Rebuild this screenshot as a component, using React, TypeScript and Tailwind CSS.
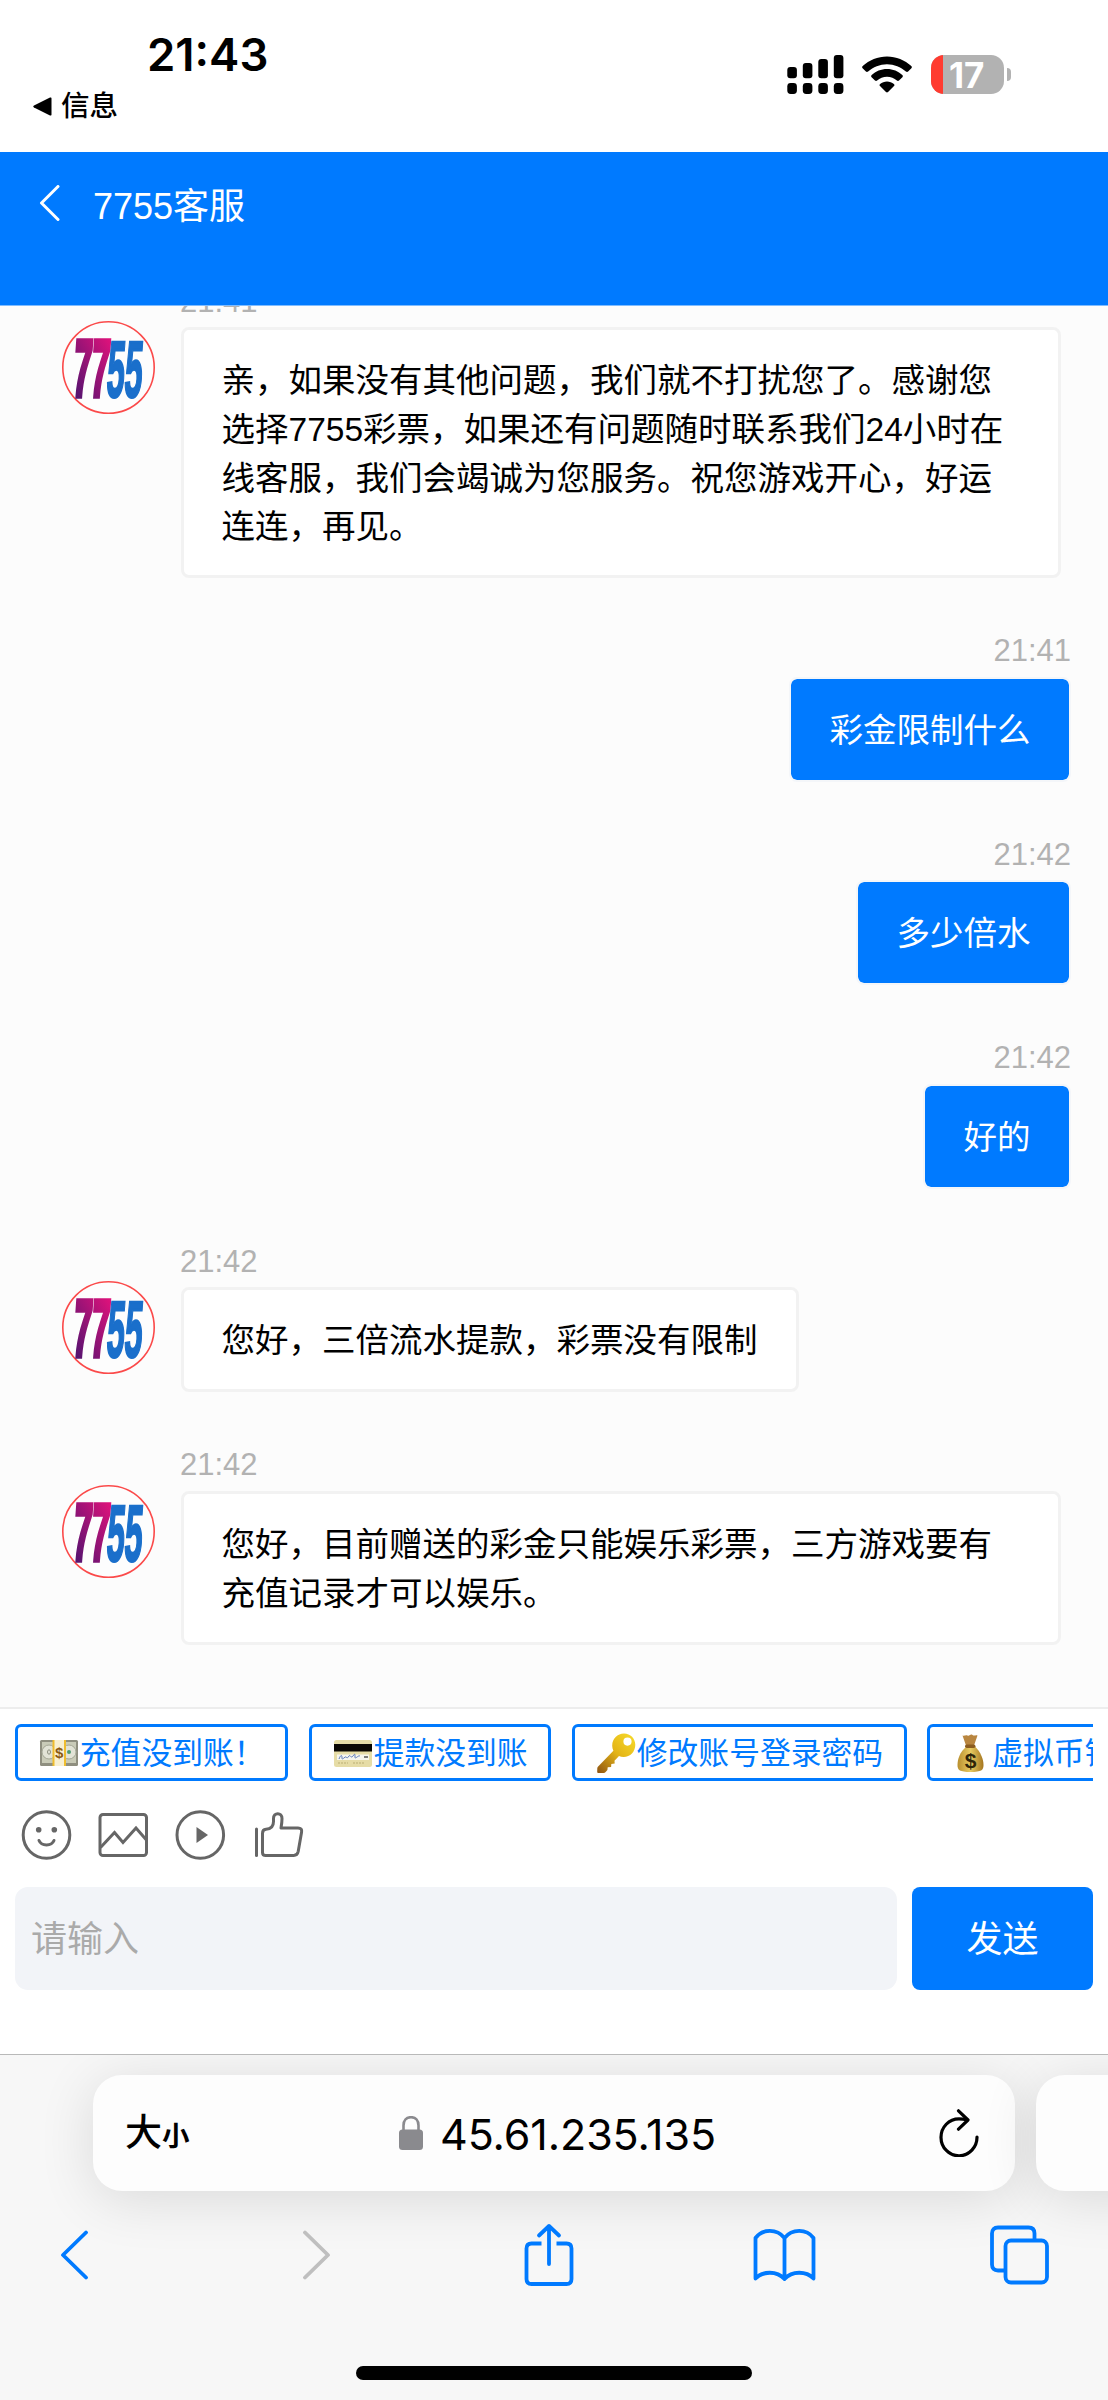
import React from "react";

const CJK = "font-['Liberation_Sans','Noto_Sans_CJK_SC',sans-serif]";
const UI = "font-['Inter','Noto_Sans_CJK_SC',sans-serif]";

type Message = { from: "agent" | "me"; time: string; lines: string[]; wide?: boolean };

const messages: Message[] = [
  {
    from: "agent",
    time: "21:41",
    wide: true,
    lines: [
      "亲，如果没有其他问题，我们就不打扰您了。感谢您",
      "选择7755彩票，如果还有问题随时联系我们24小时在",
      "线客服，我们会竭诚为您服务。祝您游戏开心，好运",
      "连连，再见。",
    ],
  },
  { from: "me", time: "21:41", lines: ["彩金限制什么"] },
  { from: "me", time: "21:42", lines: ["多少倍水"] },
  { from: "me", time: "21:42", lines: ["好的"] },
  { from: "agent", time: "21:42", lines: ["您好，三倍流水提款，彩票没有限制"] },
  {
    from: "agent",
    time: "21:42",
    wide: true,
    lines: ["您好，目前赠送的彩金只能娱乐彩票，三方游戏要有", "充值记录才可以娱乐。"],
  },
];

function SignalIcon() {
  const tops = [67, 63, 59, 55];
  return (
    <svg className="h-[39px] w-[57px]" viewBox="0 55 57 39">
      {tops.map((t, i) => (
        <g key={t}>
          <rect x={i * 15.5 + 0.3} y={t} width="9.6" height={78.2 - t} rx="3" />
          <rect x={i * 15.5 + 0.3} y="83" width="9.6" height="11" rx="3.4" />
        </g>
      ))}
    </svg>
  );
}

function WifiIcon() {
  return (
    <svg className="h-[37px] w-[50px]" viewBox="0 0 50 37">
      <path d="M25 .5c9.200 0 17.800 3.600 24.300 9.600.7.7.7 1.600.1 2.200l-3.300 3.300c-.6.6-1.500.6-2.200 0C38.800 11 32.200 8.200 25 8.200S11.200 11 6.100 15.600c-.7.6-1.600.6-2.200 0L.6 12.300c-.6-.6-.6-1.500.1-2.200C7.200 4.100 15.800.5 25 .5z" />
      <path d="M25 13c5.900 0 11.300 2.300 15.300 6 .7.600.7 1.500.1 2.200l-3.400 3.400c-.6.6-1.500.6-2.100 0-2.700-2.400-6.100-3.800-9.900-3.800s-7.200 1.400-9.900 3.800c-.6.6-1.500.6-2.100 0l-3.400-3.400c-.6-.7-.6-1.600.1-2.200 4-3.700 9.400-6 15.300-6z" />
      <path d="M25 25.500c2.600 0 5 .9 6.900 2.400.7.6.7 1.500.1 2.200l-6 6c-.6.6-1.400.6-2 0l-6-6c-.6-.7-.6-1.600.1-2.200 1.900-1.500 4.300-2.400 6.900-2.400z" />
    </svg>
  );
}

function StatusBar() {
  return (
    <div className={`flex h-[152px] shrink-0 justify-between bg-white text-black ${UI}`}>
      <div className="pt-[27px]">
        <div className="ml-[147px] h-[56px] text-[45.500px] leading-[56px] font-semibold">21:43</div>
        <div className="mt-[3px] ml-[33px] flex h-[40px] items-center">
          <svg className="h-[19px] w-[19px]" viewBox="0 0 19 19">
            <path d="M17 .6c1-.4 1.500.2 1.500 1v15.800c0 .8-.5 1.400-1.500 1L1 10.500c-1-.5-1-1.500 0-2z" />
          </svg>
          <span className="ml-[9px] text-[28.500px] leading-[40px] font-medium">信息</span>
        </div>
      </div>
      <div className="mt-[55px] mr-[97px] flex h-[39px]">
        <SignalIcon />
        <div className="ml-[18.500px] pt-[1px]">
          <WifiIcon />
        </div>
        <div className="ml-[19px] flex h-[39px] w-[73px] overflow-hidden rounded-[13px] bg-[#b2b2b2]">
          <div className="h-full w-[12px] bg-[#ff3b30]" />
          <div className="ml-[6px] text-[35px] leading-[40px] font-bold text-white">17</div>
        </div>
        <div className="mt-[13px] ml-[2.500px] h-[13px] w-[4.500px] rounded-r-full bg-[#b2b2b2]" />
      </div>
    </div>
  );
}

function Header() {
  return (
    <header className={`flex h-[154px] shrink-0 items-start border-b border-[#7fbcff] bg-[#007aff] pl-[39px] text-white ${CJK}`}>
      <svg className="mt-[33px] h-[36px] w-[21px]" viewBox="0 0 21 36">
        <path d="M19 1.500 2.500 18 19 34.500" fill="none" stroke="currentColor" strokeWidth="3" strokeLinecap="round" strokeLinejoin="round" />
      </svg>
      <h1 className="mt-[30px] ml-[33px] text-[36px] leading-[50px]">7755客服</h1>
    </header>
  );
}

function Avatar() {
  return (
    <svg className="-mt-[6px] h-[93px] w-[93px] shrink-0" viewBox="0 0 93 93">
      <defs>
        <linearGradient id="logo77" x1="0.8" y1="0" x2="0.2" y2="1">
          <stop offset="0" stopColor="#e8127c" />
          <stop offset="1" stopColor="#45146f" />
        </linearGradient>
      </defs>
      <circle cx="46.500" cy="46.500" r="45.700" fill="#fdfdfd" stroke="#fb4a4a" strokeWidth="1.600" />
      <g fontFamily="Liberation Sans" fontWeight="bold" fontSize="80">
        <text transform="translate(10 75) skewX(-4) scale(.4 1)" fill="url(#logo77)" stroke="url(#logo77)" strokeWidth="5.500">
          77
        </text>
        <text transform="translate(43.500 75.500) skewX(-4) scale(.4 1)" fill="#1a6fcb" stroke="#1a6fcb" strokeWidth="2.500">
          55
        </text>
      </g>
    </svg>
  );
}

function Bubble({ message }: { message: Message }) {
  const mine = message.from === "me";
  return (
    <div
      className={`rounded-[8px] text-[33.500px] leading-[48.800px] whitespace-nowrap ${
        mine
          ? "border-2 border-[#f4f6f9] bg-[#007aff] bg-clip-padding px-[38.500px] pt-[28px] pb-[24px] text-white"
          : "border-3 border-[#f2f2f2] bg-white px-[38px] pt-[27px] pb-[23px] text-black"
      } ${message.wide ? "w-[880px]" : ""}`}
    >
      {message.lines.map((line) => (
        <div key={line}>{line}</div>
      ))}
    </div>
  );
}

function MessageRow({ message }: { message: Message }) {
  const mine = message.from === "me";
  return (
    <div className={`mt-[53.200px] flex shrink-0 flex-col ${mine ? "items-end pr-[37px]" : "items-start pl-[61.500px]"}`}>
      <div className={`mb-[5.500px] h-[40px] text-[31px] leading-[40px] text-[#b2b2b2] ${mine ? "" : "ml-[118.500px]"}`}>
        {message.time}
      </div>
      <div className="flex items-start gap-[26px]">
        {!mine && <Avatar />}
        <Bubble message={message} />
      </div>
    </div>
  );
}

function CashIcon() {
  return (
    <svg className="h-[40px] w-[40px]" viewBox="0 0 40 40">
      <rect x="1" y="7" width="38" height="26" rx="1.500" fill="#8f8f80" />
      <rect x="3" y="9" width="34" height="21" fill="#c9cbb8" />
      <circle cx="10" cy="19" r="7" fill="#e2e3d6" stroke="#a4a795" />
      <circle cx="30" cy="19" r="7" fill="#e2e3d6" stroke="#a4a795" />
      <circle cx="30" cy="19" r="2" fill="#4d9a72" />
      <ellipse cx="10" cy="19" rx="1.500" ry="2.200" fill="none" stroke="#8d9080" />
      <rect x="14" y="7" width="12.500" height="26" fill="#f8f0d2" />
      <path d="M14.500 7v26M26 7v26" stroke="#efbd2e" strokeWidth="2" />
      <text x="20.200" y="25" textAnchor="middle" fontFamily="Liberation Sans" fontWeight="bold" fontSize="15" fill="#8b5a12">
        $
      </text>
    </svg>
  );
}

function CardIcon() {
  return (
    <svg className="h-[40px] w-[40px]" viewBox="0 0 40 40">
      <rect x="1" y="7" width="38" height="27" rx="2.500" fill="#e6dca6" />
      <rect x="1" y="11" width="38" height="7.500" fill="#0b0803" />
      <rect x="4" y="21.500" width="32" height="5.500" fill="#f6f6ee" />
      <path d="M6 26c2-5 3-4 3-1s3-2 4-1 2 1 3-1 2 3 4 0 2-2 2 1 3-2 5-1" fill="none" stroke="#5b78b8" strokeWidth="1" />
      <path d="M31 24h4" stroke="#555" strokeWidth="1.500" />
      <path d="M5 30h10M20 30h11" stroke="#c9bd85" strokeWidth="1.500" strokeDasharray="2 1" />
    </svg>
  );
}

function KeyIcon() {
  return (
    <svg className="h-[42px] w-[40px]" viewBox="0 0 40 42">
      <defs>
        <linearGradient id="keyGold" x1="1" y1="0" x2="0" y2="1">
          <stop offset="0" stopColor="#f8dc2c" />
          <stop offset=".5" stopColor="#e3b416" />
          <stop offset="1" stopColor="#8e5312" />
        </linearGradient>
      </defs>
      <path
        fill="url(#keyGold)"
        fillRule="evenodd"
        d="M28 1.500c6.500 0 11.300 5 11.300 11.300 0 7-5 12.200-11.700 12.200-1.700 0-3.300-.3-4.600-1l-4.500 4.700.2 2.800-3.400.4-.2 3-3.400.3-.3 2.700-2 2.300c-.4.500-1 .8-1.600.8L2.500 41c-.8 0-1.300-.5-1.300-1.300l.1-3.500c0-.6.200-1 .6-1.500l15.500-16c-.8-1.600-1.200-3.300-1.200-5C16.200 6.500 21.500 1.500 28 1.500zM31.500 5.500a4 4 0 1 0 0 8.200 4 4 0 0 0 0-8.200z"
      />
    </svg>
  );
}

function MoneyBagIcon() {
  return (
    <svg className="h-[40px] w-[40px]" viewBox="0 0 40 40">
      <defs>
        <linearGradient id="bagGold" x1="0" y1="0" x2="1" y2="0">
          <stop offset="0" stopColor="#b98f2f" />
          <stop offset=".5" stopColor="#e8cb62" />
          <stop offset="1" stopColor="#a5761f" />
        </linearGradient>
      </defs>
      <path d="M11.500 2.500c2 1 3-1 5 0s3-2 5-.5 3-.5 5 .5l-3.500 10h-8z" fill="#b98640" />
      <path d="M15 14c-6 5-8.500 12-8.500 18 0 5 2 7 13 7s13-2 13-7c0-6-3-13-8-18z" fill="url(#bagGold)" />
      <rect x="14" y="11.500" width="10.500" height="3.600" rx="1.800" fill="#8b5c20" />
      <text x="19.500" y="34.500" textAnchor="middle" fontFamily="Liberation Sans" fontWeight="bold" fontSize="21" fill="#2e2408">
        $
      </text>
    </svg>
  );
}

const chips: { label: string; icon: React.ReactNode }[] = [
  { label: "充值没到账！", icon: <CashIcon /> },
  { label: "提款没到账", icon: <CardIcon /> },
  { label: "修改账号登录密码", icon: <KeyIcon /> },
  { label: "虚拟币钱包", icon: <MoneyBagIcon /> },
];

function QuickReplies() {
  return (
    <div className="mx-[15px] mt-[15px] flex h-[57px] gap-[20.500px] overflow-hidden">
      {chips.map((chip) => (
        <div
          key={chip.label}
          className="flex h-[57px] shrink-0 items-center rounded-[6px] border-3 border-[#007aff] px-[20.800px] text-[30.800px] whitespace-nowrap text-[#007aff]"
        >
          {chip.icon}
          <span className="mt-[2px] ml-[1px] leading-[44px]">{chip.label}</span>
        </div>
      ))}
    </div>
  );
}

function ToolIcons() {
  const common = "h-[52px] w-[52px]";
  return (
    <div className="mt-[28px] ml-[20px] flex h-[52px] gap-[25.200px] text-[#666]">
      <svg className={common} viewBox="0 0 52 52" fill="none" stroke="currentColor" strokeWidth="3">
        <circle cx="26.500" cy="26" r="23.300" />
        <path d="M19 31.500c2.500 6 12.500 6 15 0" strokeLinecap="round" />
        <circle cx="18.700" cy="20.800" r="2.800" fill="currentColor" stroke="none" />
        <circle cx="34.300" cy="20.800" r="2.800" fill="currentColor" stroke="none" />
      </svg>
      <svg className={common} viewBox="0 0 52 52" fill="none" stroke="currentColor" strokeWidth="3">
        <rect x="3" y="5.500" width="46.500" height="41" rx="3" />
        <path d="m3.500 38.500 14-15 8.500 10 13-14.500 10 11.500" />
      </svg>
      <svg className={common} viewBox="0 0 52 52" fill="none" stroke="currentColor" strokeWidth="3">
        <circle cx="26.300" cy="26" r="23.300" />
        <path d="M22.500 18v16l11.500-8z" fill="currentColor" stroke="none" />
      </svg>
      <svg className={common} viewBox="0 0 52 52" fill="none" stroke="currentColor" strokeWidth="3" strokeLinejoin="round">
        <path d="M4.500 20v26.500" strokeLinecap="round" />
        <path d="M10.500 24.500c0-3 1-4 3.500-4.200 5.500-.3 7.500-2.800 7.500-7.800V9.500c0-6.500 8.500-6.500 8.500 0 0 4-.5 6.500-1 9.500H46c3 0 4 1.500 3.600 4l-3.400 19.500c-.6 2.800-1.700 4-4.500 4h-28c-2.200 0-3.200-1-3.200-3z" />
      </svg>
    </div>
  );
}

function Composer() {
  return (
    <div className={`flex h-[347px] shrink-0 flex-col border-t-2 border-[#ededed] bg-white ${CJK}`}>
      <QuickReplies />
      <ToolIcons />
      <div className="mx-[15px] mt-[26px] flex h-[103px] gap-[15px] text-[36px] leading-[105px]">
        <div className="flex-1 rounded-[13px] bg-[#f2f4f8] pl-[16px] text-[#aaaaaa]">请输入</div>
        <button className="w-[181px] rounded-[8px] bg-[#007aff] text-center text-white">发送</button>
      </div>
    </div>
  );
}

function AddressBar() {
  const shadow = "shadow-[0_8px_56px_rgba(0,0,0,0.12)]";
  return (
    <div className="mt-[20px] ml-[93px] flex h-[116px] gap-[21px]">
      <div className={`flex w-[922px] shrink-0 items-center rounded-[29px] bg-[#fdfdfd] text-black ${shadow}`}>
        <div className="mt-[3px] ml-[32px] flex w-[274px] items-baseline font-medium">
          <span className="text-[37px] leading-[60px]">大</span>
          <span className="text-[27.500px] leading-[60px] font-bold">小</span>
        </div>
        <svg className="h-[34px] w-[24px]" viewBox="0 0 24 34" fill="#8a8a8e">
          <rect x="0" y="13.500" width="24" height="20.500" rx="3.500" />
          <path d="M4.500 15V9.500C4.500 4.500 7.500 1.200 12 1.200s7.500 3.300 7.500 8.300V15" fill="none" stroke="#8a8a8e" strokeWidth="2.600" />
        </svg>
        <div className="mt-[2px] ml-[17px] flex-1 text-[43px] leading-[60px] tracking-[-0.1px]">45.61.235.135</div>
        <svg className="mr-[36.500px] h-[48px] w-[40px]" viewBox="0 0 40 48" fill="none" stroke="currentColor" strokeWidth="3.200" strokeLinecap="round" strokeLinejoin="round">
          <path d="M38 28A18 18.500 0 1 1 20 9.800c3 0 5 .3 8 1" />
          <path d="m19.500 1.800 9.500 9.200-9.500 9.200" />
        </svg>
      </div>
      <div className={`w-[200px] shrink-0 rounded-[29px] bg-[#fdfdfd] ${shadow}`} />
    </div>
  );
}

function Toolbar() {
  const line = { fill: "none", stroke: "currentColor", strokeWidth: 3.8, strokeLinecap: "round", strokeLinejoin: "round" } as const;
  return (
    <div className="mt-[32px] flex h-[64px] items-center pl-[60px] text-[#007aff]">
      <svg className="h-[50px] w-[29px]" viewBox="0 0 29 50" {...line}>
        <path d="M26 2.500 3 25l23 22.500" />
      </svg>
      <svg className="ml-[213px] h-[50px] w-[29px] text-[#bfbfbf]" viewBox="0 0 29 50" {...line}>
        <path d="m3 2.500 23 22.500-23 22.500" />
      </svg>
      <svg className="ml-[193px] h-[64px] w-[50px]" viewBox="0 0 50 64" {...line}>
        <path d="M17.500 20.500H7.500c-3.500 0-5 1.500-5 5V56c0 3.500 1.500 5 5 5h35c3.500 0 5-1.500 5-5V25.500c0-3.500-1.500-5-5-5h-10" strokeLinecap="butt" />
        <path d="M25 41V3M15 12.500 25 3l10 9.500" />
      </svg>
      <svg className="ml-[179px] h-[54px] w-[63px]" viewBox="0 0 63 54" {...line}>
        <path d="M31.500 10C24 .5 9.500.5 2.500 10v40.500c7-7.500 21.500-8 29 .5 7.500-8.500 22-8 29-.5V10c-7-9.500-21.500-9.500-29 0zM31.500 10v41" />
      </svg>
      <svg className="ml-[174px] h-[60px] w-[59px]" viewBox="0 0 59 60" {...line}>
        <path d="M14 45.500H8c-4 0-6-2-6-6V8.500c0-4 2-6 6-6h30.500c4 0 6 2 6 6v6" strokeLinecap="butt" />
        <rect x="15.500" y="15.500" width="41.500" height="42" rx="5.500" />
      </svg>
    </div>
  );
}

export default function App() {
  return (
    <div className="flex h-[2400px] w-[1108px] flex-col overflow-hidden bg-[#fcfcfc]">
      <StatusBar />
      <Header />
      <main className={`flex h-[1401px] shrink-0 flex-col justify-end overflow-hidden bg-[#fcfcfc] pb-[62.500px] ${CJK}`}>
        {messages.map((message, i) => (
          <MessageRow key={i} message={message} />
        ))}
      </main>
      <Composer />
      <footer className={`flex h-[346px] shrink-0 flex-col overflow-hidden border-t border-[#b9b9b9] bg-[#f7f7f7] ${UI}`}>
        <AddressBar />
        <Toolbar />
        <div className="mt-[79px] ml-[356px] h-[14px] w-[396px] rounded-full bg-black" />
      </footer>
    </div>
  );
}
